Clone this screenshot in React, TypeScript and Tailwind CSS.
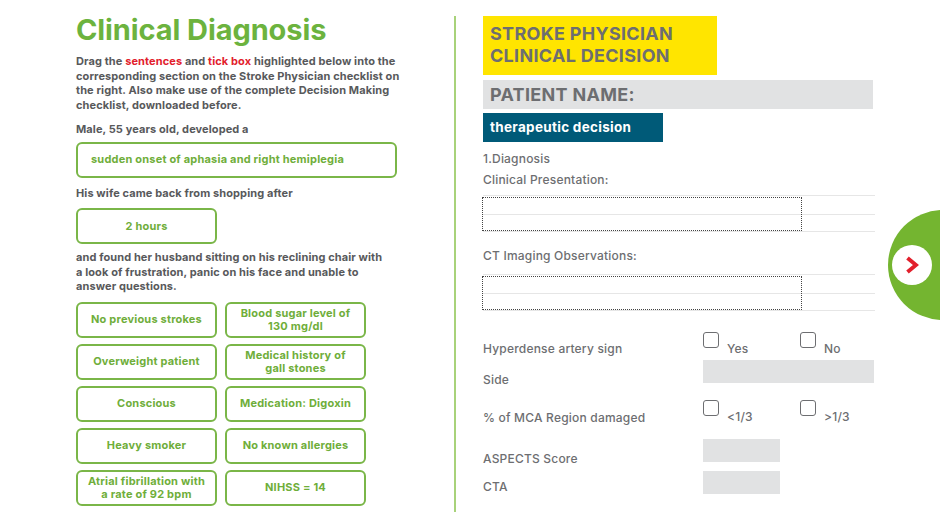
import React from "react";

const font = { fontFamily: "Inter, 'Open Sans', sans-serif" };

function Chip({ children, className = "" }: { children: React.ReactNode; className?: string }) {
  return (
    <div
      className={`flex h-[36px] items-center justify-center rounded-[6px] border-2 border-[#7ab648] px-1 text-center text-[11px] font-bold leading-[13px] tracking-[0.2px] text-[#6fae3a] ${className}`}
    >
      {children}
    </div>
  );
}

function Check({ label }: { label: string }) {
  return (
    <div className="flex w-[97px] items-start gap-[8px]">
      <div className="h-[16px] w-[16px] rounded-[3px] border-[1.5px] border-[#6d6e71]" />
      <span className="mt-[10px] text-[12px] font-medium leading-[14px] tracking-[0.2px] text-[#6d6e71]">{label}</span>
    </div>
  );
}

function Lined({ top }: { top: string }) {
  return (
    <div className={`relative ${top} h-[37px] w-[392px] border-y border-[#e6e6e6]`}>
      <div className="mt-[18px] border-t border-[#e6e6e6]" />
      <div className="absolute left-[-1px] top-[1px] h-[34px] w-[320px] border border-dotted border-[#444]" />
    </div>
  );
}

const label = "text-[12px] font-medium leading-[18px] tracking-[0.2px] text-[#6d6e71]";
const head = "text-[12px] font-medium leading-[16px] tracking-[0.2px] text-[#6d6e71]";
const para = "text-[11px] font-bold leading-[14.5px] tracking-[0.1px] text-[#58595b]";

export default function App() {
  return (
    <div className="relative h-[528px] w-[940px] overflow-hidden bg-white" style={font}>
      <div className="flex h-full">
        {/* Left */}
        <div className="w-[454px] pl-[76px] pt-[13px]">
          <h1 className="text-[29px] font-bold leading-[34px] tracking-[-0.1px] text-[#6cb33e]">Clinical Diagnosis</h1>
          <p className={`mt-[7px] w-[335px] ${para}`}>
            Drag the <span className="text-[#e2202c]">sentences</span> and <span className="text-[#e2202c]">tick box</span> highlighted below into the corresponding section on the Stroke Physician checklist on the right. Also make use of the complete Decision Making checklist, downloaded before.
          </p>
          <p className={`mt-[10px] ${para}`}>Male, 55 years old, developed a</p>
          <div className="mt-[5px] flex h-[36px] w-[321px] items-center rounded-[6px] border-2 border-[#7ab648] pl-[13px] text-[11px] font-bold tracking-[0.2px] text-[#6fae3a]">
            sudden onset of aphasia and right hemiplegia
          </div>
          <p className={`mt-[8px] ${para}`}>His wife came back from shopping after</p>
          <Chip className="mt-[8px] w-[141px]">2 hours</Chip>
          <p className={`mt-[6px] w-[310px] ${para}`}>
            and found her husband sitting on his reclining chair with a look of frustration, panic on his face and unable to answer questions.
          </p>
          <div className="mt-[8px] grid w-[290px] grid-cols-[141px_141px] gap-x-[8px] gap-y-[6px]">
            <Chip>No previous strokes</Chip>
            <Chip>Blood sugar level of<br />130 mg/dl</Chip>
            <Chip>Overweight patient</Chip>
            <Chip>Medical history of<br />gall stones</Chip>
            <Chip>Conscious</Chip>
            <Chip>Medication: Digoxin</Chip>
            <Chip>Heavy smoker</Chip>
            <Chip>No known allergies</Chip>
            <Chip>Atrial fibrillation with<br />a rate of 92 bpm</Chip>
            <Chip>NIHSS = 14</Chip>
          </div>
        </div>

        {/* Divider */}
        <div className="mt-[16px] h-[496px] w-[2px] bg-[#a8d27a]" />

        {/* Right */}
        <div className="pl-[27px] pt-[16px]">
          <div className="h-[59px] w-[234px] bg-[#ffe500] px-[7px] pt-[7px] text-[18px] font-bold leading-[22px] tracking-[0.3px] text-[#6d6e71]">
            STROKE PHYSICIAN
            <br />
            CLINICAL DECISION
          </div>
          <div className="mt-[5px] flex h-[29px] w-[390px] items-center bg-[#e1e2e3] px-[7px] text-[18px] font-bold tracking-[0.3px] text-[#6d6e71]">
            PATIENT NAME:
          </div>
          <div className="mt-[4px] flex h-[29px] w-[180px] items-center bg-[#005a78] px-[7px] text-[13.5px] font-bold tracking-[0.3px] text-white">
            therapeutic decision
          </div>
          <div className={`mt-[9px] ${head}`}>1.Diagnosis</div>
          <div className={`mt-[5px] ${head}`}>Clinical Presentation:</div>
          <Lined top="mt-[7px]" />
          <div className={`mt-[16px] ${head}`}>CT Imaging Observations:</div>
          <Lined top="mt-[10px]" />

          <div className="mt-[21px] flex items-start">
            <div className={`w-[220px] pt-[8px] ${label}`}>Hyperdense artery sign</div>
            <Check label="Yes" />
            <Check label="No" />
          </div>
          <div className="mt-[2px] flex items-start">
            <div className={`w-[220px] pt-[11px] ${label}`}>Side</div>
            <div className="h-[23px] w-[171px] bg-[#e1e2e3]" />
          </div>
          <div className="mt-[11px] flex items-start">
            <div className={`w-[220px] pt-[9px] ${label}`}>% of MCA Region damaged</div>
            <Check label="<1/3" />
            <Check label=">1/3" />
          </div>
          <div className="mt-[12px] flex items-start">
            <div className={`w-[220px] pt-[11px] ${label}`}>ASPECTS Score</div>
            <div className="h-[23px] w-[77px] bg-[#e1e2e3]" />
          </div>
          <div className="mt-[3px] flex items-start">
            <div className={`w-[220px] pt-[7px] ${label}`}>CTA</div>
            <div className="h-[23px] w-[77px] bg-[#e1e2e3]" />
          </div>
        </div>
      </div>

      {/* Next button */}
      <div className="absolute left-[888px] top-[210px] flex h-[110px] w-[110px] items-center rounded-full bg-[#74b530] pl-[4px]">
        <div className="flex h-[40px] w-[40px] items-center justify-center rounded-full bg-white">
          <svg width="14" height="18" viewBox="0 0 14 18">
            <path d="M2.5 2 L11 9 L2.5 16" fill="none" stroke="#e2202c" strokeWidth="4" strokeLinejoin="miter" />
          </svg>
        </div>
      </div>
    </div>
  );
}
